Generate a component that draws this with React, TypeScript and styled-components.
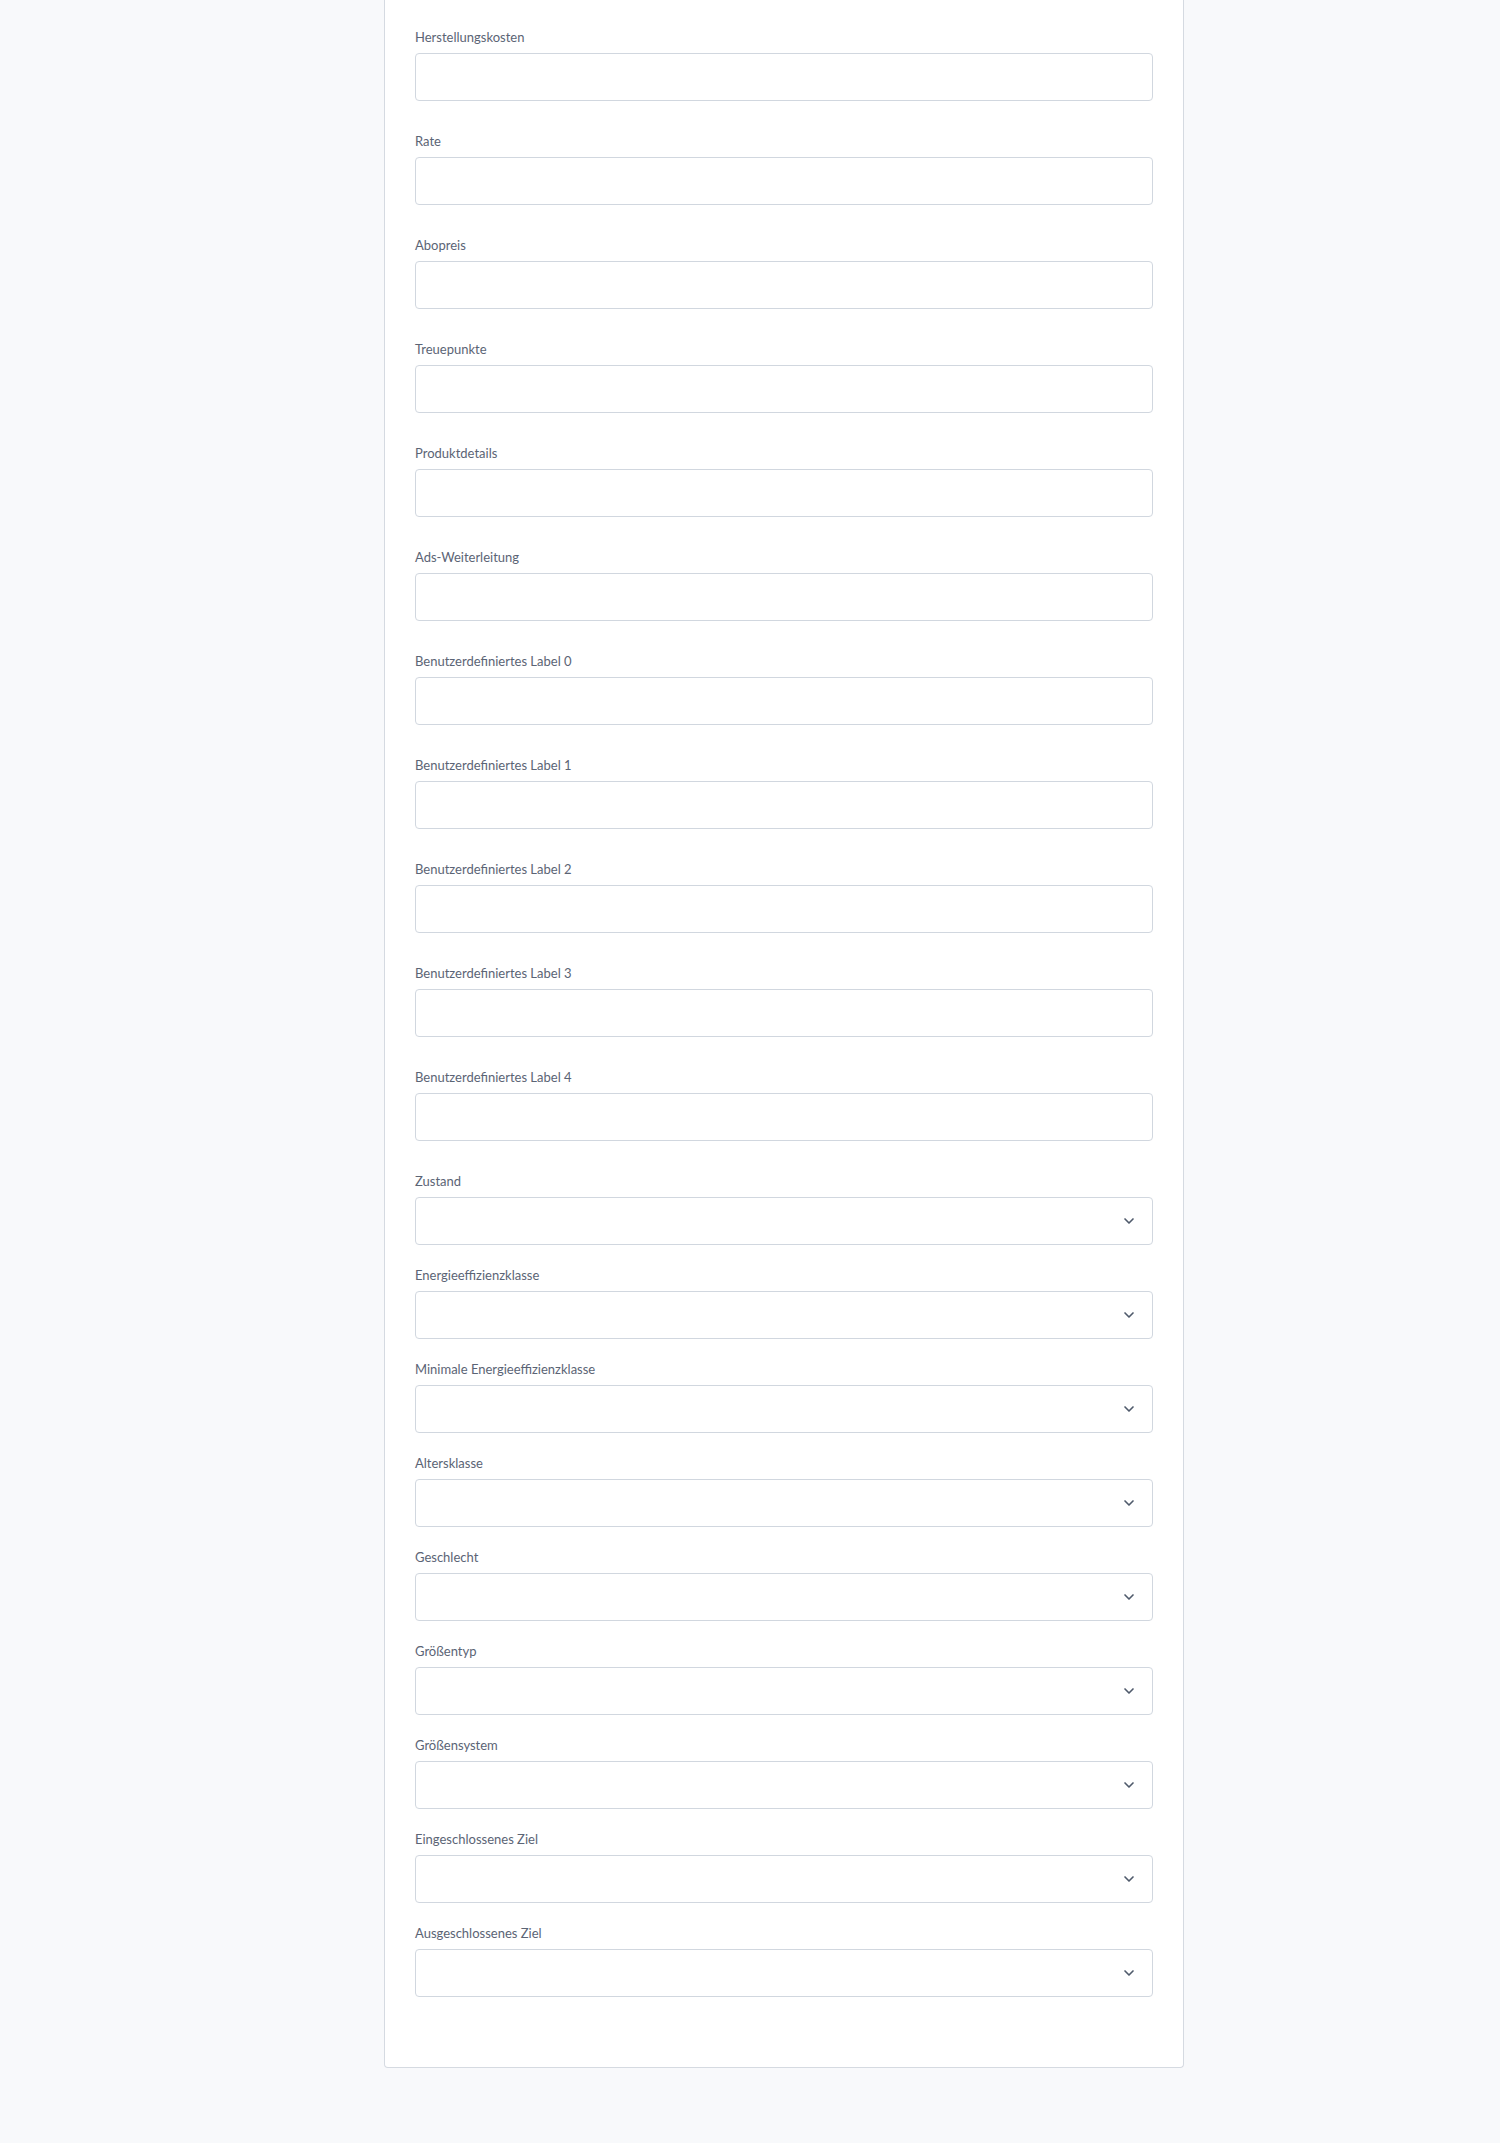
import React from 'react';
import styled, { createGlobalStyle } from 'styled-components';
import { ChevronDown } from 'lucide-react';

const GlobalStyle = createGlobalStyle`
  html, body {
    margin: 0;
    padding: 0;
    background: #f8f9fb;
    font-family: Lato, "Noto Sans", "Liberation Sans", sans-serif;
  }
  * { box-sizing: border-box; }
`;

const Page = styled.main`
  display: flex;
  justify-content: center;
  padding-left: 68px;
  min-height: 2143px;
`;

const Card = styled.section`
  width: 800px;
  align-self: flex-start;
  background: #fff;
  border: 1px solid #d5dae1;
  border-top: none;
  border-radius: 0 0 4px 4px;
  padding: 27px 30px 50px;
`;

const Group = styled.div<{ $gap: number }>`
  display: flex;
  flex-direction: column;
  margin-bottom: ${(p) => p.$gap}px;
`;

const Label = styled.label`
  font-size: 13px;
  line-height: 20px;
  color: #5b6475;
  margin-bottom: 6px;
`;

const Input = styled.input`
  height: 48px;
  width: 100%;
  border: 1px solid #d1d7df;
  border-radius: 4px;
  background: #fff;
  padding: 0 14px;
  font: inherit;
  font-size: 14px;
  color: #374151;
  outline: none;
`;

const SelectWrap = styled.div`
  position: relative;
`;

const Select = styled.select`
  appearance: none;
  height: 48px;
  width: 100%;
  border: 1px solid #d1d7df;
  border-radius: 4px;
  background: #fff;
  padding: 0 40px 0 14px;
  font: inherit;
  font-size: 14px;
  color: #374151;
  outline: none;
`;

const Chevron = styled.span`
  position: absolute;
  right: 16px;
  top: 50%;
  transform: translateY(-50%);
  display: flex;
  color: #4f5a6b;
  pointer-events: none;
`;

const textFields = [
  'Herstellungskosten',
  'Rate',
  'Abopreis',
  'Treuepunkte',
  'Produktdetails',
  'Ads-Weiterleitung',
  'Benutzerdefiniertes Label 0',
  'Benutzerdefiniertes Label 1',
  'Benutzerdefiniertes Label 2',
  'Benutzerdefiniertes Label 3',
  'Benutzerdefiniertes Label 4',
];

const selectFields = [
  'Zustand',
  'Energieeffizienzklasse',
  'Minimale Energieeffizienzklasse',
  'Altersklasse',
  'Geschlecht',
  'Größentyp',
  'Größensystem',
  'Eingeschlossenes Ziel',
  'Ausgeschlossenes Ziel',
];

const slug = (s: string) => s.toLowerCase().replace(/[^a-z0-9]+/g, '-');

export default function App() {
  return (
    <>
      <GlobalStyle />
      <Page>
        <Card>
          {textFields.map((name) => (
            <Group key={name} $gap={30}>
              <Label htmlFor={slug(name)}>{name}</Label>
              <Input id={slug(name)} type="text" />
            </Group>
          ))}
          {selectFields.map((name) => (
            <Group key={name} $gap={20}>
              <Label htmlFor={slug(name)}>{name}</Label>
              <SelectWrap>
                <Select id={slug(name)} defaultValue="">
                  <option value=""></option>
                </Select>
                <Chevron>
                  <ChevronDown size={16} strokeWidth={2.5} />
                </Chevron>
              </SelectWrap>
            </Group>
          ))}
        </Card>
      </Page>
    </>
  );
}
